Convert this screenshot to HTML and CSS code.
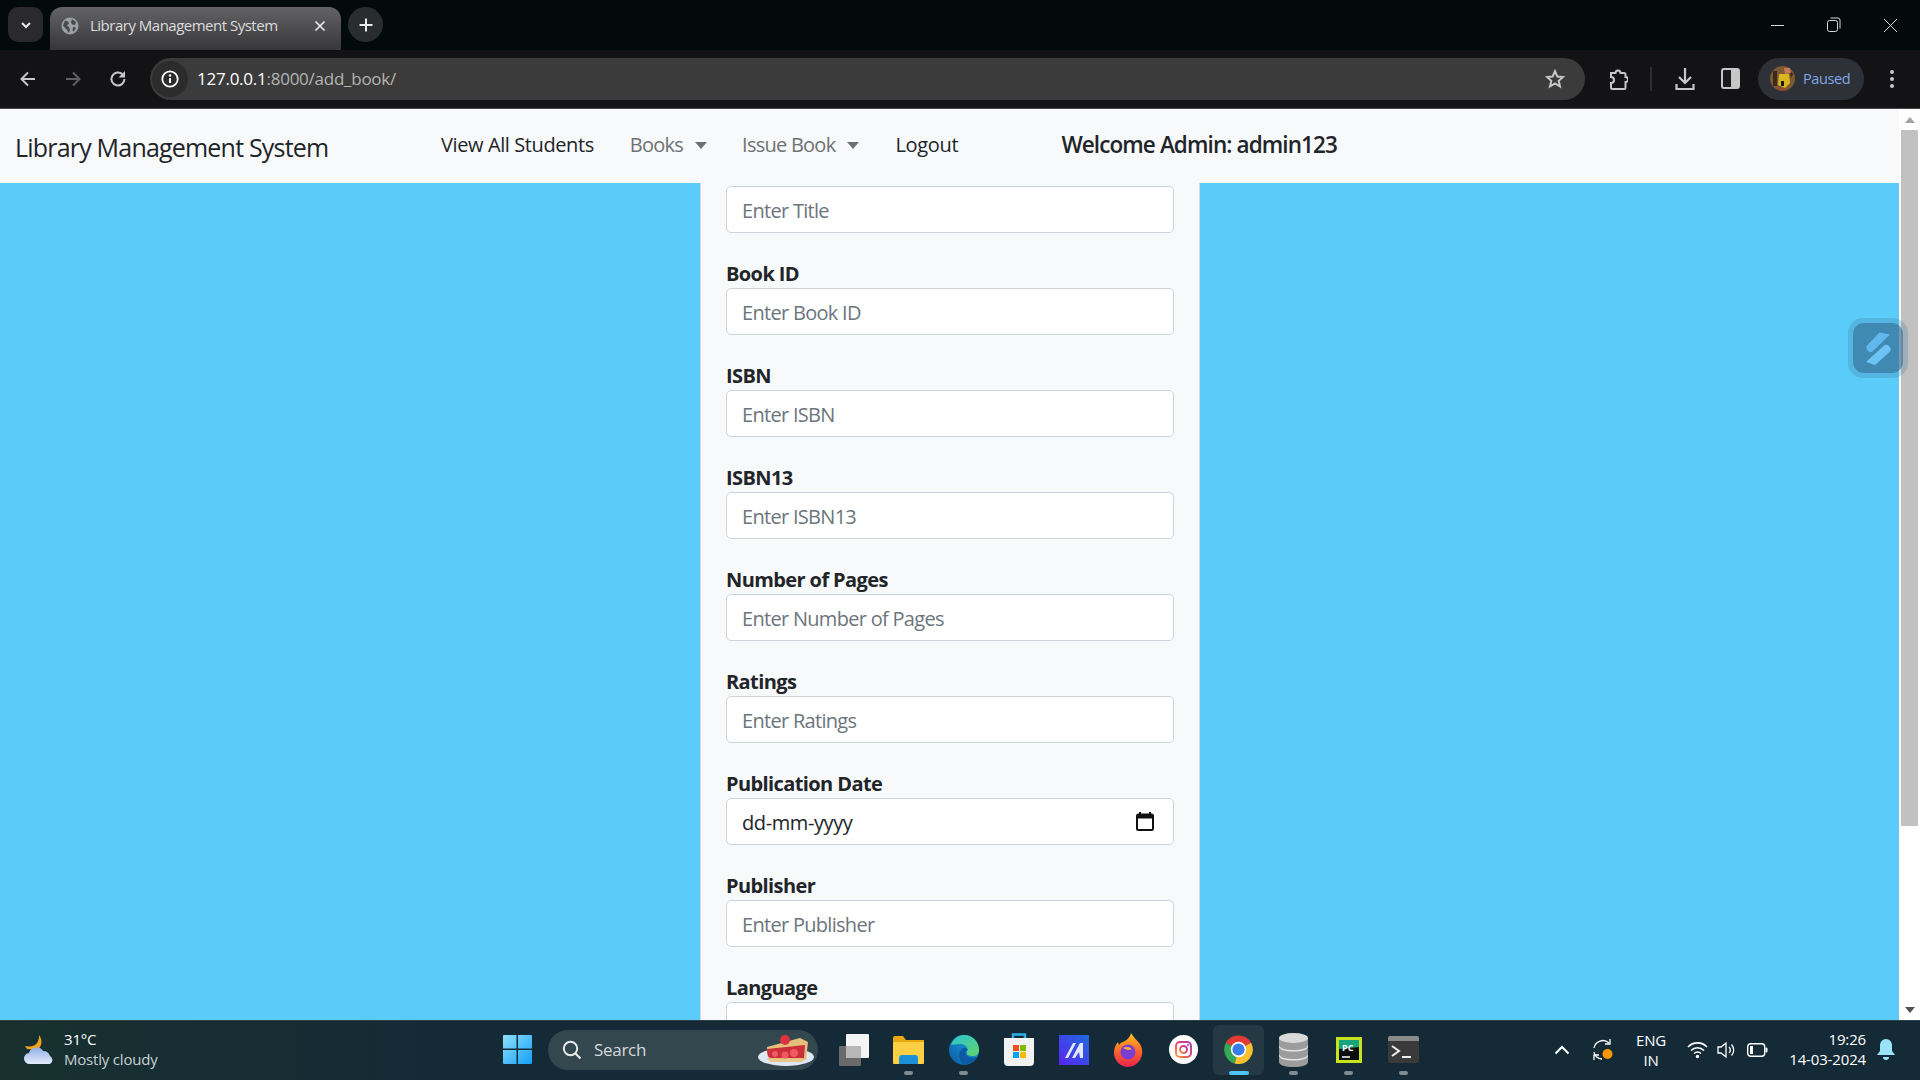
FILE: index.html
```html
<!DOCTYPE html>
<html lang="en">
<head>
<meta charset="utf-8">
<title>Library Management System</title>
<link rel="stylesheet" href="styles.css">
</head>
<body>
<div class="screen">
  <header class="tabstrip">
    <div class="tab-search"><svg width="14" height="14" viewBox="0 0 14 14"><path d="M3 5l4 4 4-4" fill="none" stroke="#e8eaed" stroke-width="2"/></svg></div>
    <div class="tab">
      <svg class="favicon" width="18" height="18" viewBox="0 0 18 18"><circle cx="9" cy="9" r="8.5" fill="#9aa0a6"/><path d="M4 3.5l3 1 1 2-2 2 2 1.500 1 3-1 3-2-3-2-2-2-2.500zM11 2l4 3-1 3-3-.5-1-2.500zM12 10l3 .5-2 4-1.500-1z" fill="#4a4a4d"/></svg>
      <span class="tab-title">Library Management System</span>
      <svg class="tab-close" width="12" height="12" viewBox="0 0 12 12"><path d="M1.500 1.500l9 9m0-9l-9 9" stroke="#e8eaed" stroke-width="1.700"/></svg>
    </div>
    <div class="new-tab"><svg width="16" height="16" viewBox="0 0 16 16"><path d="M8 1.500v13M1.500 8h13" stroke="#e8eaed" stroke-width="2"/></svg></div>
    <div class="win-controls">
      <span class="win-btn"><svg width="14" height="14" viewBox="0 0 14 14"><path d="M0 7.500h13" stroke="#d6d6d6" stroke-width="1"/></svg></span>
      <span class="win-btn"><svg width="14" height="16" viewBox="0 0 14 16"><rect x=".5" y="3.500" width="10" height="11" rx="2" fill="none" stroke="#d6d6d6"/><path d="M3.500 1h7.500a2 2 0 0 1 2 2v8.500" fill="none" stroke="#d6d6d6"/></svg></span>
      <span class="win-btn"><svg width="15" height="15" viewBox="0 0 15 15"><path d="M1 1l13 13m0-13L1 14" stroke="#d6d6d6" stroke-width="1"/></svg></span>
    </div>
  </header>

  <div class="toolbar">
    <span class="tool"><svg width="18" height="18" viewBox="0 0 18 18"><path d="M16 9H3m6-6.500L2.500 9 9 15.500" fill="none" stroke="#c7c7c7" stroke-width="2"/></svg></span>
    <span class="tool"><svg width="18" height="18" viewBox="0 0 18 18"><path d="M2 9h13M9 2.500L15.500 9 9 15.500" fill="none" stroke="#5f6064" stroke-width="2"/></svg></span>
    <span class="tool"><svg width="18" height="18" viewBox="0 0 18 18"><path d="M15.500 9a6.500 6.500 0 1 1-2-4.700" fill="none" stroke="#c7c7c7" stroke-width="2"/><path d="M16 1v6.500H9.500z" fill="#c7c7c7"/></svg></span>
    <div class="omnibox">
      <span class="site-info"><svg width="18" height="18" viewBox="0 0 18 18"><circle cx="9" cy="9" r="7.700" fill="none" stroke="#fff" stroke-width="1.800"/><path d="M9 8v5" stroke="#fff" stroke-width="2"/><circle cx="9" cy="5.500" r="1.200" fill="#fff"/></svg></span>
      <span class="url"><b>127.0.0.1</b>:8000/add_book/</span>
      <svg class="star" width="20" height="20" viewBox="0 0 20 20"><path d="M10 2.200l2.300 5.300 5.700.5-4.300 3.800 1.300 5.700-5-3-5 3 1.300-5.700L2 8l5.700-.5z" fill="none" stroke="#c7c7c7" stroke-width="2"/></svg>
    </div>
    <span class="tool tool-ext"><svg width="20" height="24" viewBox="0 0 20 24"><path d="M3 6h4.500a2.500 2.500 0 0 1 5 0H16a1.500 1.500 0 0 1 1.500 1.500V10a2.500 2.500 0 0 1 0 5v5.500A1.500 1.500 0 0 1 16 22H4.500A1.500 1.500 0 0 1 3 20.500V16a3 3 0 0 0 0-6z" fill="none" stroke="#c7c7c7" stroke-width="2"/></svg></span>
    <span class="sep"></span>
    <span class="tool"><svg width="20" height="24" viewBox="0 0 20 24"><path d="M10 1v15M4 10l6 6 6-6" fill="none" stroke="#c7c7c7" stroke-width="2.200"/><path d="M1.500 17v5h17v-5" fill="none" stroke="#c7c7c7" stroke-width="2.200"/></svg></span>
    <span class="tool tool-side"><svg width="19" height="21" viewBox="0 0 19 21"><rect x="1" y="1" width="17" height="19" rx="2" fill="#1a1a1c" stroke="#c7c7c7" stroke-width="2"/><rect x="10" y="1" width="8" height="19" fill="#c7c7c7"/></svg></span>
    <div class="profile">
      <svg class="avatar" width="25" height="25" viewBox="0 0 25 25"><circle cx="12.500" cy="12.500" r="12.500" fill="#7c5a33"/><path d="M9 8h10l1 9-5 5-7-3z" fill="#d9b620"/><path d="M3 5h4v15H3zM19 3l4 5-2 4z" fill="#3d2a1a"/><path d="M11 15h3v5h-3z" fill="#1b1b10"/><path d="M14 2h6l1 5-6 1z" fill="#c97a5a"/><path d="M7 20l9 4-5 1z" fill="#a0452c"/></svg>
      <span class="paused">Paused</span>
    </div>
    <span class="tool tool-menu"><svg width="6" height="20" viewBox="0 0 6 20"><circle cx="3" cy="3" r="2" fill="#c7c7c7"/><circle cx="3" cy="10" r="2" fill="#c7c7c7"/><circle cx="3" cy="17" r="2" fill="#c7c7c7"/></svg></span>
  </div>

  <div class="viewport">
    <div class="page">
      <nav class="navbar">
        <a class="brand">Library Management System</a>
        <a class="nav-link nav-first">View All Students</a>
        <a class="nav-link muted caret nav-books">Books</a>
        <a class="nav-link muted caret nav-issue">Issue Book</a>
        <a class="nav-link nav-logout">Logout</a>
        <span class="welcome">Welcome Admin: admin123</span>
      </nav>
      <main class="main">
        <form class="panel">
          <div class="field"><input class="input" placeholder="Enter Title"></div>
          <div class="field"><label class="label">Book ID</label><input class="input" placeholder="Enter Book ID"></div>
          <div class="field"><label class="label">ISBN</label><input class="input" placeholder="Enter ISBN"></div>
          <div class="field"><label class="label">ISBN13</label><input class="input" placeholder="Enter ISBN13"></div>
          <div class="field"><label class="label">Number of Pages</label><input class="input" placeholder="Enter Number of Pages"></div>
          <div class="field"><label class="label">Ratings</label><input class="input" placeholder="Enter Ratings"></div>
          <div class="field"><label class="label">Publication Date</label>
            <div class="input date"><span class="date-text">dd-mm-yyyy</span><svg width="18" height="19" viewBox="0 0 18 19"><path d="M4 0v3M14 0v3" stroke="#111" stroke-width="2"/><rect x="1" y="2.500" width="16" height="15.500" rx="1.500" fill="none" stroke="#111" stroke-width="2"/><path d="M1 3h16v3.500H1z" fill="#111"/></svg></div>
          </div>
          <div class="field"><label class="label">Publisher</label><input class="input" placeholder="Enter Publisher"></div>
          <div class="field"><label class="label">Language</label><input class="input" placeholder="Enter Language"></div>
        </form>
      </main>
    </div>
    <div class="scrollbar">
      <span class="arrow arrow-up"></span>
      <span class="track"><span class="thumb"></span></span>
      <span class="arrow arrow-down"></span>
    </div>
    <div class="widget"><div class="widget-in"><svg width="25" height="33" viewBox="0 0 25 33"><path d="M13.500 .5L24 2.500 6.500 19.500Q4 21 2 19 -1 16 1.500 13z" fill="#62b8ec"/><path d="M18 13.500Q20.500 12 23 14 26 17 23.500 20L9 33 0 30z" fill="#6cc4f4"/></svg></div></div>
  </div>

  <footer class="taskbar">
    <div class="weather">
      <svg width="32" height="30" viewBox="0 0 32 30"><defs><linearGradient id="cl" x1="0" y1="0" x2="0" y2="1"><stop offset="0" stop-color="#8fb0e8"/><stop offset="1" stop-color="#e4ecfb"/></linearGradient></defs><path d="M15 0C19 5 18 12 13 15L3 14 1 11C7 12 11 11 13 8 15 5 15 3 15 0z" fill="#f2a21d"/><path d="M6 29a5.500 5.500 0 0 1-1-11 6.500 6.500 0 0 1 5-5 7.500 7.500 0 0 1 9 3 6.500 6.500 0 0 1 7 5 4.500 4.500 0 0 1 0 8z" fill="url(#cl)"/></svg>
      <div class="weather-text"><span class="temp">31°C</span><span class="cond">Mostly cloudy</span></div>
    </div>
    <span class="tb win"><svg width="29" height="29" viewBox="0 0 29 29"><defs><linearGradient id="w" x1="0" y1="0" x2="1" y2="1"><stop offset="0" stop-color="#8fe0fb"/><stop offset="1" stop-color="#12a0f8"/></linearGradient></defs><path d="M0 1a1 1 0 0 1 1-1h12.500v13.500H0zM15 0h13a1 1 0 0 1 1 1v12.500H15zM0 15h13.500v14H1a1 1 0 0 1-1-1zM15 15h14v13a1 1 0 0 1-1 1H15z" fill="url(#w)"/></svg></span>
    <div class="search">
      <svg width="20" height="20" viewBox="0 0 20 20"><circle cx="8.500" cy="8.500" r="6.700" fill="none" stroke="#e6e9ea" stroke-width="2"/><path d="M13.500 13.500L18.500 18.500" stroke="#e6e9ea" stroke-width="2.200"/></svg>
      <span class="search-text">Search</span>
      <svg class="pie" width="58" height="34" viewBox="0 0 58 34"><ellipse cx="29" cy="24" rx="28" ry="9" fill="#dfe6f4"/><path d="M10 14l33-9 8 4-2 18H14c-3 0-4-4-4-13z" fill="#e5c07a"/><path d="M10 16l38-4-1 13H14c-3 0-4-4-4-9z" fill="#cc2e3a"/><circle cx="18" cy="21" r="3" fill="#ee5a63"/><circle cx="28" cy="22" r="3.500" fill="#ee5a63"/><circle cx="37" cy="20" r="4" fill="#ee5a63"/><circle cx="28" cy="7" r="5" fill="#dd3340"/><path d="M10 26h38l-3 3H14z" fill="#e9c98a"/></svg>
    </div>
    <span class="tb tb-first"><svg width="30" height="32" viewBox="0 0 30 32"><rect x="0" y="12" width="22" height="20" rx="1" fill="#6a6a6a"/><rect x="7" y="0" width="23" height="24" rx="1" fill="#f4f4f4"/><rect x="7" y="12" width="15" height="12" fill="#b8b8b8"/></svg></span>
    <span class="tb"><svg width="31" height="28" viewBox="0 0 31 28"><path d="M0 2a2 2 0 0 1 2-2h8l3 4h18v24H0z" fill="#e8a70d"/><path d="M0 6h31v20a2 2 0 0 1-2 2H2a2 2 0 0 1-2-2z" fill="#fdcf45"/><path d="M6 22a3 3 0 0 1 3-3h13a3 3 0 0 1 3 3v6H6z" fill="#1c8fd8"/></svg><i class="dot"></i></span>
    <span class="tb"><svg width="30" height="32" viewBox="0 0 30 32"><defs><linearGradient id="e1" x1="0" y1="1" x2="1" y2="0"><stop offset="0" stop-color="#0c59a4"/><stop offset="1" stop-color="#1ba7e0"/></linearGradient><linearGradient id="e2" x1="0" y1="0" x2="1" y2="1"><stop offset="0" stop-color="#2bc3d2"/><stop offset="1" stop-color="#62d46c"/></linearGradient></defs><circle cx="15" cy="16" r="15" fill="url(#e1)"/><path d="M2 11C5 3 11 1 15 1c9 0 15 7 15 15 0 4-3 6-6 6-4 0-7-1-6-4 1-4-1-8-6-8-5 0-8 1-10 1z" fill="url(#e2)"/><path d="M12 16c2-3 6-3 7 0-2 0-4 3-1 6 3 2 7 2 10 1-3 5-8 8-13 8-5-4-6-11-3-15z" fill="#0c59a4"/></svg><i class="dot"></i></span>
    <span class="tb"><svg width="30" height="33" viewBox="0 0 30 33"><path d="M9 7V1.500h12V7" fill="none" stroke="#2bb3ea" stroke-width="2.400"/><path d="M0 5h30v24a4 4 0 0 1-4 4H4a4 4 0 0 1-4-4z" fill="#f2f2f2"/><rect x="9" y="12" width="6" height="6" fill="#f25022"/><rect x="16" y="12" width="6" height="6" fill="#7fba00"/><rect x="9" y="19" width="6" height="6" fill="#00a4ef"/><rect x="16" y="19" width="6" height="6" fill="#ffb900"/></svg></span>
    <span class="tb"><svg width="30" height="30" viewBox="0 0 30 30"><defs><linearGradient id="m" x1="1" y1="0" x2="0" y2="1"><stop offset="0" stop-color="#1f6ae0"/><stop offset="1" stop-color="#5a24f0"/></linearGradient></defs><rect width="30" height="30" fill="url(#m)"/><path d="M6 23L14 8h3L9 23zM13 23l8-15h3v15h-3l-1-6-4 6z" fill="#dfe8ff"/></svg></span>
    <span class="tb"><svg width="29" height="34" viewBox="0 0 29 34"><defs><linearGradient id="f" x1="0.500" y1="0" x2="0.500" y2="1"><stop offset="0" stop-color="#ffc41f"/><stop offset=".5" stop-color="#ff6a2a"/><stop offset="1" stop-color="#e8224f"/></linearGradient></defs><path d="M17 0c2 4 6 7 9 11 3 5 3 11 0 16-3 4-7 7-12 7C6 34 0 27 0 20c0-4 1-8 4-11l1 3c2-3 4-3 6-4 3-2 5-4 6-8z" fill="url(#f)"/><circle cx="14" cy="19" r="7.500" fill="#7a3fd0"/><path d="M9 15c4-2 8-1 9 2-2-1-3 0-4 0z" fill="#ffb43a"/></svg></span>
    <span class="tb"><svg width="29" height="29" viewBox="0 0 29 29"><defs><linearGradient id="ig" x1="0" y1="1" x2="1" y2="0"><stop offset="0" stop-color="#f9a13a"/><stop offset=".5" stop-color="#e8456b"/><stop offset="1" stop-color="#a83bc0"/></linearGradient></defs><circle cx="14.500" cy="14.500" r="14.500" fill="#fff"/><rect x="7" y="7" width="15" height="15" rx="4" fill="none" stroke="url(#ig)" stroke-width="2"/><circle cx="14.500" cy="14.500" r="3.500" fill="none" stroke="url(#ig)" stroke-width="2"/><circle cx="19" cy="10" r="1" fill="#c43a9c"/></svg></span>
    <span class="tb tb-active"><svg width="31" height="31" viewBox="0 0 32 32"><path d="M16 16L3 9A15 15 0 0 1 29 9z" fill="#e53935"/><path d="M16 16L3 9A15 15 0 0 0 12 30.500z" fill="#34a853"/><path d="M16 16L29 9A15 15 0 0 1 12 30.500z" fill="#fbc02d"/><circle cx="16" cy="16" r="8" fill="#fff"/><circle cx="16" cy="16" r="6.300" fill="#3b7de8"/></svg><i class="bar"></i></span>
    <span class="tb"><svg width="29" height="34" viewBox="0 0 29 34"><path d="M0 5v24c0 3 6 5 14.500 5S29 32 29 29V5z" fill="#9c9c9c"/><ellipse cx="14.500" cy="5" rx="14.500" ry="5" fill="#d9d9d9"/><path d="M0 12c0 3 6 5 14.500 5S29 15 29 12v1.500c0 3-6 5-14.500 5S0 16.500 0 13.500zM0 21c0 3 6 5 14.500 5S29 24 29 21v1.500c0 3-6 5-14.500 5S0 25.500 0 22.500z" fill="#e6e6e6"/></svg><i class="dot"></i></span>
    <span class="tb"><svg width="26" height="26" viewBox="0 0 26 26"><rect width="26" height="26" fill="#c8e21f"/><rect x="3" y="3" width="20" height="20" fill="#0b0f0c"/><path d="M3 3h20v7L3 12z" fill="#18a57e"/><text x="6" y="13.500" class="pc-text">PC</text><path d="M6 20h8" stroke="#fff" stroke-width="1.500"/></svg><i class="dot"></i></span>
    <span class="tb"><svg width="31" height="27" viewBox="0 0 31 27"><rect width="31" height="27" rx="2" fill="#3a3a3a"/><path d="M0 2a2 2 0 0 1 2-2h27a2 2 0 0 1 2 2v3H0z" fill="#8a8a8a"/><path d="M4 10l7 5-7 5" fill="none" stroke="#eee" stroke-width="2"/><path d="M14 21h9" stroke="#eee" stroke-width="2"/></svg><i class="dot"></i></span>
    <div class="tray">
      <span class="t-chev"><svg width="16" height="10" viewBox="0 0 16 10"><path d="M1.500 8.500L8 2l6.500 6.500" fill="none" stroke="#fff" stroke-width="2"/></svg></span>
      <span class="t-sync"><svg width="22" height="22" viewBox="0 0 22 22"><path d="M2 9a9 9 0 0 1 15-5" fill="none" stroke="#fff" stroke-width="1.300"/><path d="M18 0v5h-5" fill="none" stroke="#fff" stroke-width="1.300"/><path d="M2 13a8 8 0 0 0 8 7" fill="none" stroke="#fff" stroke-width="1.300"/><path d="M2 21v-5h5" fill="none" stroke="#fff" stroke-width="1.300"/><circle cx="15.500" cy="15" r="5" fill="#ff9800"/></svg></span>
      <span class="t-lang">ENG<br>IN</span>
      <span class="t-ico t-wifi"><svg width="21" height="18" viewBox="0 0 21 18"><path d="M1 6a13 13 0 0 1 19 0M4 9.500a9 9 0 0 1 13 0M7 12.500a5 5 0 0 1 7 0" fill="none" stroke="#fff" stroke-width="1.600"/><circle cx="10.500" cy="15.500" r="1.700" fill="#fff"/></svg></span>
      <span class="t-ico"><svg width="21" height="18" viewBox="0 0 21 18"><path d="M1 6h3l5-4v14l-5-4H1z" fill="none" stroke="#fff" stroke-width="1.300"/><path d="M12 6a4 4 0 0 1 0 6M14.500 3.500a8 8 0 0 1 0 11" fill="none" stroke="#fff" stroke-width="1.300"/></svg></span>
      <span class="t-ico"><svg width="21" height="14" viewBox="0 0 21 14"><rect x=".7" y=".7" width="17" height="12.600" rx="3" fill="none" stroke="#fff" stroke-width="1.400"/><rect x="3" y="3" width="3" height="8" fill="#fff"/><rect x="18.500" y="4.500" width="2" height="5" rx="1" fill="#fff"/></svg></span>
      <span class="clock"><span>19:26</span><span>14-03-2024</span></span>
      <span class="t-bell"><svg width="18" height="22" viewBox="0 0 18 22"><path d="M9 0a6 6 0 0 1 6 6v6l3 4H0l3-4V6a6 6 0 0 1 6-6z" fill="#9be3fb"/><path d="M6 18h6a3 3 0 0 1-6 0z" fill="#9be3fb"/></svg></span>
    </div>
  </footer>
</div>
</body>
</html>
```
FILE: styles.css
```css
* { box-sizing: border-box; }
html, body { margin: 0; padding: 0; height: 100%; overflow: hidden; }
body { font-family: "Open Sans", "Noto Sans", "Liberation Sans", sans-serif; }
svg { display: block; flex: none; }
.screen { display: flex; flex-direction: column; width: 1920px; height: 1080px; }

/* tab strip */
.tabstrip { display: flex; align-items: flex-end; height: 50px; background: #020a0b; padding-left: 8px; flex: none; }
.tab-search { width: 35px; height: 35px; margin-bottom: 8px; border-radius: 10px; background: #2a2a2c; display: flex; align-items: center; justify-content: center; }
.tab { display: flex; align-items: center; width: 291px; height: 43px; margin-left: 7px; padding: 0 15px 5px 11px; border-radius: 12px 12px 0 0; background: linear-gradient(#636365, #37373a); }
.favicon { margin-right: 11px; }
.tab-title { flex: 1; margin-top: -2px; color: #dcdcdc; font-size: 15px; letter-spacing: -.5px; white-space: nowrap; }
.new-tab { width: 35px; height: 35px; margin: 0 0 8px 7px; border-radius: 50%; background: #2a2d30; display: flex; align-items: center; justify-content: center; }
.win-controls { display: flex; margin-left: auto; height: 50px; padding-right: 1px; align-items: center; }
.win-btn { width: 56.500px; display: flex; justify-content: center; }

/* toolbar */
.toolbar { display: flex; align-items: center; height: 59px; padding: 0 0 1px 5px; background: #131315; border-bottom: 1px solid #4a4a4c; flex: none; }
.tool { width: 45px; display: flex; justify-content: center; flex: none; }
.omnibox { display: flex; align-items: center; width: 1435px; height: 42px; margin-left: 10px; padding: 0 20px 0 2px; border-radius: 21px; background: #3b3b3b; flex: none; }
.site-info { width: 36px; height: 36px; border-radius: 50%; background: #2c2c2c; display: flex; align-items: center; justify-content: center; }
.url { flex: 1; margin-left: 9px; color: #b4b4b4; font-size: 17px; letter-spacing: -.25px; }
.url b { font-weight: 400; color: #fff; }
.tool-ext { margin-left: 10px; }
.sep { width: 2px; height: 24px; margin: 0 10px; background: #2d2d30; flex: none; }
.tool-side { margin-left: 1px; }
.profile { display: flex; align-items: center; width: 106px; height: 42px; margin-left: 5px; padding-left: 12px; border-radius: 21px; background: #2e3138; flex: none; }
.paused { margin-left: 8px; color: #7ea9e6; font-size: 14.500px; letter-spacing: -.4px; }
.tool-menu { margin-left: 5px; }

/* viewport */
.viewport { position: relative; display: flex; flex: 1; min-height: 0; }
.page { display: flex; flex-direction: column; flex: 1; min-width: 0; background: #5bcbf9; overflow: hidden; }
.navbar { display: flex; align-items: center; height: 74px; background: #f8f9fa; color: #212529; flex: none; }
.brand { width: 426px; margin-left: 15px; margin-top: 1px; font-size: 25px; letter-spacing: -.8px; white-space: nowrap; }
.nav-link { font-size: 20px; letter-spacing: -.75px; margin-top: -3px; white-space: nowrap; }
.nav-first { letter-spacing: -.4px; }
.muted { color: #6e7174; }
.caret::after { content: ""; display: inline-block; margin-left: 12px; vertical-align: 3px; border-top: 7px solid #6e7174; border-left: 6px solid transparent; border-right: 6px solid transparent; }
.nav-books { margin-left: 36px; }
.nav-issue { margin-left: 35px; }
.nav-logout { margin-left: 36px; letter-spacing: -.3px; }
.welcome { margin-left: 103px; margin-top: -3px; font-size: 22.500px; font-weight: 600; letter-spacing: -.9px; white-space: nowrap; }
.main { display: flex; justify-content: center; flex: 1; min-height: 0; }
.panel { width: 500px; margin-left: 1px; padding: 3px 25px 0; background: #f8f9fa; border-left: 1px solid #d4dade; border-right: 1px solid #d4dade; flex: none; }
.field { display: flex; flex-direction: column; margin-bottom: 22px; }
.label { height: 33px; color: #212529; font-size: 20px; font-weight: 700; letter-spacing: -.6px; line-height: 37px; }
.input { width: 100%; height: 47px; padding: 2px 15px 0; border: 1px solid #ced4da; border-radius: 5px; background: #fff; color: #212529; font-family: inherit; font-size: 20px; letter-spacing: -.7px; outline: none; flex: none; }
.input::placeholder { color: #6c757d; opacity: 1; }
.date { display: flex; align-items: center; justify-content: space-between; padding-right: 19px; }
.date-text { letter-spacing: -.4px; }
.date svg { margin-top: -3px; }

/* scrollbar */
.scrollbar { display: flex; flex-direction: column; width: 21px; background: #fff; flex: none; }
.arrow { height: 21px; display: flex; align-items: center; justify-content: center; flex: none; }
.arrow-up::after { content: ""; border-bottom: 6px solid #a3a3a3; border-left: 5px solid transparent; border-right: 5px solid transparent; }
.arrow-down::after { content: ""; border-top: 6px solid #505050; border-left: 5px solid transparent; border-right: 5px solid transparent; }
.track { flex: 1; padding: 0 2px; }
.thumb { display: block; height: 696px; background: #c1c1c1; }
.widget { position: absolute; left: 1848px; top: 209px; width: 60px; height: 60px; padding: 5px; border-radius: 15px; background: rgba(60, 120, 160, .25); }
.widget-in { width: 100%; height: 100%; border-radius: 11px; background: rgba(50, 100, 140, .55); display: flex; align-items: center; justify-content: center; }

/* taskbar */
.taskbar { display: flex; align-items: center; height: 60px; padding-bottom: 2px; border-top: 1px solid #2f4149; background: linear-gradient(90deg, #17302f, #142a36 25%, #142a37); color: #fff; flex: none; }
.weather { display: flex; align-items: center; width: 490px; padding-left: 24px; }
.weather-text { display: flex; flex-direction: column; margin-left: 8px; margin-top: -2px; font-size: 15px; line-height: 20px; letter-spacing: -.2px; }
.temp { color: #fff; }
.cond { color: #c9d0d4; }
.tb { position: relative; width: 55px; height: 50px; display: flex; align-items: center; justify-content: center; flex: none; }
.win { margin-right: 3px; }
.search { display: flex; align-items: center; width: 270px; height: 40px; padding-left: 14px; border-radius: 20px; background: #33474f; flex: none; }
.search-text { margin-left: 12px; color: #d6d9db; font-size: 17px; letter-spacing: -.3px; }
.pie { margin-left: auto; margin-right: 3px; }
.tb-first { margin-left: 8px; }
.dot { position: absolute; left: 23px; bottom: 0; width: 9px; height: 4px; border-radius: 2px; background: #7e8a90; }
.tb-active::before { content: ""; position: absolute; inset: 0 2px; border-radius: 6px; background: #253944; }
.tb-active svg { position: relative; }
.bar { position: absolute; left: 18px; bottom: 0; width: 20px; height: 4px; border-radius: 2px; background: #4fc3f7; }
.pc-text { font: 700 9px "Open Sans", sans-serif; fill: #fff; }
.tray { display: flex; align-items: center; margin-left: auto; padding-right: 24px; }
.t-chev { width: 30px; display: flex; justify-content: center; }
.t-sync { width: 30px; margin-left: 11px; display: flex; justify-content: center; }
.t-lang { width: 50px; margin-left: 8px; text-align: center; font-size: 15px; line-height: 20px; letter-spacing: -.2px; }
.t-ico { width: 30px; display: flex; justify-content: center; }
.t-wifi { margin-left: 6px; }
.clock { display: flex; flex-direction: column; align-items: flex-end; width: 91px; margin-left: 3px; margin-top: -2px; font-size: 15px; line-height: 20px; letter-spacing: -.15px; white-space: nowrap; }
.t-bell { width: 20px; margin-left: 10px; display: flex; justify-content: center; }
```
